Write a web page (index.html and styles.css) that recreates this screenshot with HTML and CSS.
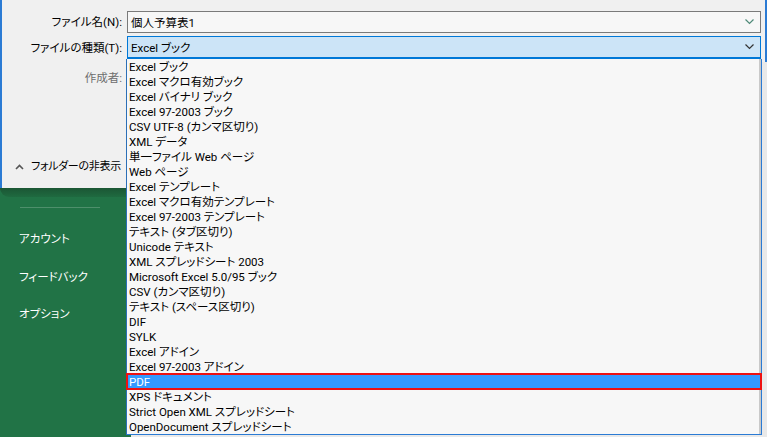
FILE: index.html
```html
<!DOCTYPE html>
<html lang="ja">
<head>
<meta charset="utf-8">
<title>名前を付けて保存</title>
<link rel="stylesheet" href="styles.css">
</head>
<body>
<div class="dialog">
  <div class="form">
    <label class="label">ファイル名(N):</label>
    <div class="field input"><span>個人予算表1</span>
      <svg class="chev green" width="9" height="6" viewBox="0 0 9 6"><path d="M0.5 0.5 L4.5 4.5 L8.5 0.5" fill="none" stroke="currentColor" stroke-width="1.2"/></svg>
    </div>
    <label class="label">ファイルの種類(T):</label>
    <div class="field select"><span>Excel ブック</span>
      <svg class="chev" width="9" height="6" viewBox="0 0 9 6"><path d="M0.5 0.5 L4.5 4.5 L8.5 0.5" fill="none" stroke="currentColor" stroke-width="1.2"/></svg>
    </div>
    <label class="label muted">作成者:</label>
    <div></div>
  </div>
  <div class="footer">
    <svg class="caret" width="9" height="6" viewBox="0 0 9 6"><path d="M1 5 L4.5 1.5 L8 5" fill="none" stroke="currentColor" stroke-width="1.6"/></svg>
    <span>フォルダーの非表示</span>
  </div>
</div>
<div class="backstage">
  <div class="shade"></div>
  <div class="sep"></div>
  <nav class="nav">
    <div class="nav-item">アカウント</div>
    <div class="nav-item">フィードバック</div>
    <div class="nav-item">オプション</div>
  </nav>
</div>
<ul class="dropdown">
  <li>Excel ブック</li>
  <li>Excel マクロ有効ブック</li>
  <li>Excel バイナリ ブック</li>
  <li>Excel 97-2003 ブック</li>
  <li>CSV UTF-8 (カンマ区切り)</li>
  <li>XML データ</li>
  <li>単一ファイル Web ページ</li>
  <li>Web ページ</li>
  <li>Excel テンプレート</li>
  <li>Excel マクロ有効テンプレート</li>
  <li>Excel 97-2003 テンプレート</li>
  <li>テキスト (タブ区切り)</li>
  <li>Unicode テキスト</li>
  <li>XML スプレッドシート 2003</li>
  <li>Microsoft Excel 5.0/95 ブック</li>
  <li>CSV (カンマ区切り)</li>
  <li>テキスト (スペース区切り)</li>
  <li>DIF</li>
  <li>SYLK</li>
  <li>Excel アドイン</li>
  <li>Excel 97-2003 アドイン</li>
  <li class="selected">PDF</li>
  <li>XPS ドキュメント</li>
  <li>Strict Open XML スプレッドシート</li>
  <li>OpenDocument スプレッドシート</li>
</ul>
</body>
</html>
```

FILE: styles.css
```css
* { box-sizing: border-box; }
html, body { margin: 0; padding: 0; }
body {
  width: 767px;
  height: 437px;
  overflow: hidden;
  background: #217346;
  font-family: Roboto, "Noto Sans CJK JP", sans-serif;
  font-size: 11.5px;
  font-feature-settings: "palt";
  color: #000;
  position: relative;
}
.dialog {
  height: 188px;
  background: #f0f0f0;
  border-left: 2px solid #2b7bd4;
  border-right: 2px solid #2b7bd4;
  width: 767px;
  display: flex;
  flex-direction: column;
}
.form {
  display: grid;
  grid-template-columns: 120px 1fr;
  column-gap: 5px;
  row-gap: 3px;
  padding: 11px 4px 0 0;
  grid-template-rows: 22px 23px 24px;
}
.label {
  text-align: right;
  align-self: center;
  line-height: 16px;
}
.label.muted { color: #6d6d6d; align-self: end; }
.field {
  display: flex;
  align-items: center;
  justify-content: space-between;
  padding: 0 6px 0 3px;
}
.input {
  background: #f7f7f7;
  border: 1px solid #7a7a7a;
}
.select {
  background: #cce4f7;
  border: 1px solid #0078d7;
  border-bottom-width: 2px;
}
.chev { color: #333; }
.chev.green { color: #4f8a78; }
.footer {
  margin-top: auto;
  height: 42px;
  display: flex;
  align-items: flex-start;
  padding: 13px 0 0 13px;
  gap: 7px;
  line-height: 16px;
  font-size: 11px;
  letter-spacing: -0.3px;
}
.caret { color: #555; margin-top: 5px; }
.backstage {
  height: 249px;
}
.shade {
  height: 9px;
  background: linear-gradient(#1b5634, #1f6a40);
  border-bottom-left-radius: 10px;
}
.sep {
  height: 1px;
  width: 80px;
  margin: 10px 0 0 20px;
  background: #4e8f6b;
}
.nav {
  display: flex;
  flex-direction: column;
  padding: 23px 0 0 19px;
  gap: 21.5px;
}
.nav-item {
  color: #fff;
  line-height: 16px;
}
.dropdown {
  position: absolute;
  left: 126px;
  top: 59px;
  width: 636px;
  margin: 0;
  padding: 0;
  list-style: none;
  background: #f7f7f7;
  border-left: 1px solid #2b6fb7;
  border-right: 1px solid #2b7bd4;
  border-bottom: 1px solid #2b7bd4;
  box-shadow: inset -2px 0 0 #c9c9c9, 5px 3px 0 #e9e9e9;
}
.dropdown li {
  height: 15px;
  line-height: 15px;
  padding: 1px 0 0 2px;
  white-space: nowrap;
}
.dropdown li.selected {
  background: #3399ff;
  color: #fff;
  outline: 2px solid #ee1111;
  outline-offset: -1px;
}
```
